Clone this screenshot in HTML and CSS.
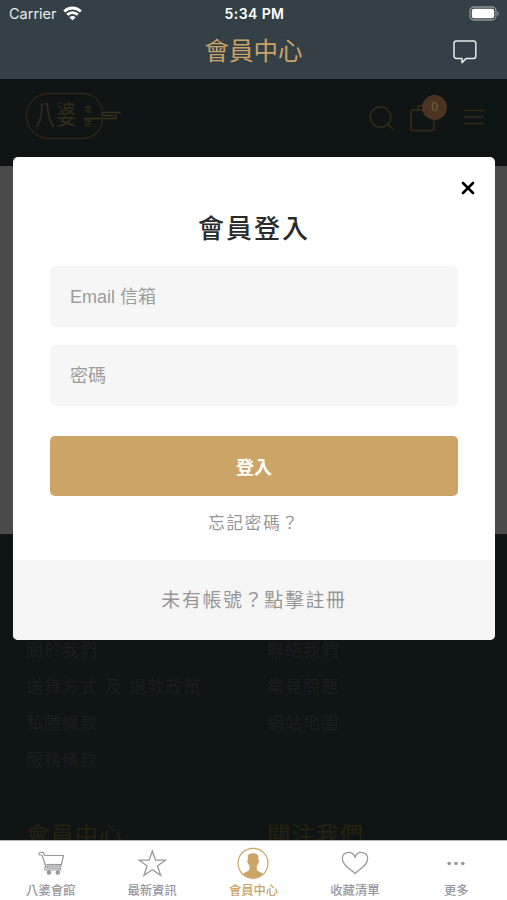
FILE: index.html
```html
<!DOCTYPE html>
<html lang="zh-Hant">
<head>
    <meta charset="UTF-8">
    <meta name="viewport" content="width=device-width, initial-scale=1.0">
    <title>會員中心</title>
    <link rel="stylesheet" href="styles.css">
</head>
<body>
    <div class="app">
        <header class="topbar">
            <div class="status">
                <div class="carrier">
                    <span>Carrier</span>
                    <svg width="19" height="15" viewBox="0 0 19 15" fill="none" stroke="#fff" stroke-width="2.8">
                        <path d="M1.2 5.4a11.8 11.8 0 0 1 16.6 0"/>
                        <path d="M4.2 8.8a7.5 7.5 0 0 1 10.600 0"/>
                        <path d="M9.5 14.2 6.400 11.400a4.300 4.300 0 0 1 6.200 0z" fill="#fff" stroke="none"/>
                    </svg>
                </div>
                <span class="time">5:34 PM</span>
                <svg class="battery" width="31" height="15" viewBox="0 0 31 15">
                    <rect x="1" y="1" width="26" height="13" rx="4" fill="none" stroke="#8d9698" stroke-width="1.3"/>
                    <rect x="2.8" y="2.8" width="22.4" height="9.4" rx="2.2" fill="#fff"/>
                    <path d="M28.4 5.2v4.6c1.8-.6 1.8-4 0-4.6z" fill="#8d9698"/>
                </svg>
            </div>
            <div class="navbar">
                <h1>會員中心</h1>
                <svg class="chat" width="26" height="26" viewBox="0 0 26 26" fill="none" stroke="#e4ebec" stroke-width="1.5" stroke-linejoin="round">
                    <path d="M4.2 2h17.4a2.2 2.2 0 0 1 2.2 2.2v13a2.2 2.2 0 0 1-2.2 2.2h-7.4L10 23.6v-4.2H4.2A2.2 2.2 0 0 1 2 17.2V4.2A2.2 2.2 0 0 1 4.2 2z"/>
                </svg>
            </div>
        </header>

        <div class="webview">
            <div class="shop-header">
                <div class="logo">
                    <div class="logo-text">
                        <span class="logo-ba">八</span>
                        <span class="logo-po">婆</span>
                        <span class="logo-small"><span>會</span><span>館</span></span>
                    </div>
                    <svg class="logo-frame" width="98" height="48" viewBox="0 0 98 48" fill="none" stroke="#2c2619" stroke-width="1.4">
                        <path d="M76.500 19C75 9 67 1.500 56 1.500H23a22.500 22.500 0 0 0 0 45H56c11 0 20-8 20.500-19"/>
                        <path d="M58 26.500H90V23.500H76V20.500H95" stroke="#3a301b"/>
                    </svg>
                </div>
                <div class="shop-icons">
                    <svg width="26" height="26" viewBox="0 0 26 26" fill="none" stroke="#302918" stroke-width="1.8">
                        <circle cx="11.5" cy="12" r="10.2"/>
                        <path d="M18.5 19 24.500 25"/>
                    </svg>
                    <div class="bag">
                        <svg width="26" height="28" viewBox="0 0 26 28" fill="none" stroke="#302918" stroke-width="1.8">
                            <rect x="1" y="6" width="23" height="20.5" rx="2"/>
                            <path d="M7.5 6c0-6 8-6 8 0"/>
                        </svg>
                        <span class="badge">0</span>
                    </div>
                    <svg width="20" height="16" viewBox="0 0 20 16" stroke="#302918" stroke-width="1.6">
                        <path d="M0 1.500H20M0 8H20M0 14.500H20"/>
                    </svg>
                </div>
            </div>
            <div class="shop-body"></div>
            <div class="shop-footer">
                <div class="footer-col">
                    <ul>
                        <li>關於我們</li>
                        <li>送貨方式 及 退款政策</li>
                        <li>私隱條款</li>
                        <li>服務條款</li>
                    </ul>
                    <h3>會員中心</h3>
                </div>
                <div class="footer-col">
                    <ul>
                        <li>聯絡我們</li>
                        <li>常見問題</li>
                        <li>網站地圖</li>
                    </ul>
                    <h3>關注我們</h3>
                </div>
            </div>

            <div class="modal">
                <button class="close" type="button" aria-label="關閉">
                    <svg width="14" height="14" viewBox="0 0 14 14" stroke="#000" stroke-width="2.6" stroke-linecap="round">
                        <path d="M2 2 12 12M12 2 2 12"/>
                    </svg>
                </button>
                <form class="login">
                    <h2>會員登入</h2>
                    <input type="email" placeholder="Email 信箱">
                    <input type="password" placeholder="密碼">
                    <button class="submit" type="button">登入</button>
                    <a class="forgot">忘記密碼？</a>
                </form>
                <a class="register">未有帳號？點擊註冊</a>
            </div>
        </div>

        <nav class="tabbar">
            <a class="tab">
                <svg width="32" height="32" viewBox="0 0 32 32" fill="none" stroke="#97979f" stroke-width="1.2" stroke-linejoin="round">
                    <path d="M9.500 8.500 8.800 6C8.500 5.200 8 5.500 5 5.500C3.500 5.500 3.500 8 5 8H7L10.800 19.500C9 21 9.500 23 11.500 23H25.500V21.200H12.500C11.500 21.200 12 19.200 13 19.200H26L28.500 8.500H9.500"/>
                    <path d="M11.200 17.500H26.300"/>
                    <circle cx="14" cy="25.500" r="1.700" fill="#97979f"/>
                    <circle cx="22.800" cy="25.500" r="1.700" fill="#97979f"/>
                </svg>
                <span>八婆會館</span>
            </a>
            <a class="tab">
                <svg width="32" height="32" viewBox="0 0 32 32" fill="none" stroke="#97979f" stroke-width="1.3">
                    <path d="M16.300 4 19.500 13.200H29.300L21.500 19 24.700 28.400 16.300 22.800 7.900 28.400 11.100 19 3.300 13.200H13.100z"/>
                </svg>
                <span>最新資訊</span>
            </a>
            <a class="tab active">
                <svg width="32" height="32" viewBox="0 0 32 32">
                    <circle cx="16" cy="16.3" r="15" fill="none" stroke="#cba567" stroke-width="1.2"/>
                    <path d="M10.800 9.500C10.500 5 21.500 5 21.300 9.500L21.500 13C22.500 13.500 21.700 16.500 20.700 17L19.800 19.500V22.500C20.500 24.500 24 25 26.300 27C21 32.300 11 32.300 5.700 27C8 25 11.500 24.500 12.500 22.500V19.500L11.500 17C10.300 16.500 9.800 13.500 10.800 13z" fill="#cba567"/>
                </svg>
                <span>會員中心</span>
            </a>
            <a class="tab">
                <svg width="32" height="32" viewBox="0 0 32 32" fill="none" stroke="#97979f" stroke-width="1.2">
                    <path d="M16 26.5C11 22 3.300 18 3.300 11.800C3.300 4.500 13 3 16 10.200C19 3 28.700 4.500 28.700 11.800C28.700 18 21 22 16 26.500z"/>
                </svg>
                <span>收藏清單</span>
            </a>
            <a class="tab">
                <svg width="32" height="32" viewBox="0 0 32 32" fill="#97979f">
                    <circle cx="9.2" cy="16.500" r="1.8"/>
                    <circle cx="16" cy="16.500" r="1.8"/>
                    <circle cx="22.8" cy="16.500" r="1.8"/>
                </svg>
                <span>更多</span>
            </a>
        </nav>
    </div>
</body>
</html>
```
FILE: styles.css
```css
* {
    box-sizing: border-box;
}

body {
    margin: 0;
    font-family: "Liberation Sans", "Noto Sans CJK TC", sans-serif;
}

h1, h2, h3, ul {
    margin: 0;
    padding: 0;
    font-weight: normal;
}

svg {
    display: block;
}

.app {
    display: flex;
    flex-direction: column;
    height: 900px;
    overflow: hidden;
}

/* top bar */
.topbar {
    height: 79px;
    background: #344046;
}

.status {
    display: grid;
    grid-template-columns: 1fr auto 1fr;
    align-items: center;
    height: 27px;
    padding: 0 7px 0 9px;
    color: #fff;
    font-family: Inter, sans-serif;
    font-size: 14.5px;
}

.carrier {
    display: flex;
    align-items: center;
    gap: 6px;
    color: #e8edee;
}

.time {
    font-size: 14px;
    font-weight: 600;
    letter-spacing: 0.4px;
}

.battery {
    justify-self: end;
}

.navbar {
    display: grid;
    grid-template-columns: 1fr auto 1fr;
    align-items: center;
    height: 49px;
    padding: 0 29px;
}

.navbar h1 {
    grid-column: 2;
    padding-top: 1px;
    color: #c9a469;
    font-size: 24.5px;
    line-height: 36px;
}

.chat {
    justify-self: end;
}

/* shop page */
.webview {
    position: relative;
    flex: 1;
    min-height: 0;
    overflow: hidden;
    background: #0f1415;
}

.shop-header {
    display: flex;
    justify-content: space-between;
    height: 87px;
    padding: 13px 23px 0 26px;
}

.logo {
    position: relative;
    width: 98px;
    height: 48px;
    color: #342c1b;
}

.logo-frame {
    position: absolute;
    top: 0;
    left: 0;
}

.logo-text {
    display: flex;
    align-items: center;
    height: 48px;
    padding-left: 9px;
}

.logo-ba {
    width: 22px;
    font-size: 20px;
    line-height: 28px;
    transform: scaleY(1.35);
}

.logo-po {
    width: 27px;
    font-size: 19px;
    line-height: 28px;
    transform: scaleY(1.35);
}

.logo-small {
    display: flex;
    flex-direction: column;
    gap: 6px;
    padding-top: 2px;
    font-size: 8px;
    line-height: 8px;
}

.shop-icons {
    display: flex;
    align-items: flex-start;
    padding-top: 13px;
}

.shop-icons > svg:first-child {
    margin-right: 1px;
}

.bag {
    position: relative;
    margin: -1px 28px 0 14px;
}

.badge {
    position: absolute;
    top: -9px;
    left: 12px;
    width: 25px;
    height: 25px;
    border-radius: 50%;
    background: #4b3421;
    color: #7c6142;
    font-size: 12px;
    line-height: 24px;
    text-align: center;
}

.shop-icons > svg:last-child {
    margin-top: 4px;
}

.shop-body {
    height: 368px;
    background: #4a4a4a;
}

.shop-footer {
    display: grid;
    grid-template-columns: 241px 1fr;
    padding: 99px 26px 0;
}

.footer-col ul {
    height: 173px;
    list-style: none;
    color: #1b1f20;
    font-size: 17px;
    letter-spacing: 1px;
    line-height: 36.7px;
}

.footer-col li {
    word-spacing: 1px;
}

.footer-col h3 {
    color: #26220f;
    font-size: 23.5px;
    letter-spacing: 0.7px;
    line-height: 60px;
}

/* login modal */
.modal {
    position: absolute;
    top: 78px;
    left: 13px;
    right: 12px;
    height: 483px;
    overflow: hidden;
    border-radius: 5px;
    background: #fff;
    text-align: center;
}

.close {
    position: absolute;
    top: 24px;
    right: 20px;
    padding: 0;
    border: none;
    background: none;
    cursor: pointer;
}

.login {
    display: flex;
    flex-direction: column;
    height: 403px;
    padding: 51px 37px 0;
}

.login h2 {
    height: 58px;
    color: #2a2a2a;
    font-size: 26px;
    font-weight: 500;
    letter-spacing: 2px;
    line-height: 42px;
}

.login input {
    height: 61px;
    margin-bottom: 18px;
    padding: 1px 20px 0;
    border: none;
    border-radius: 5px;
    background: #f6f6f6;
    font-family: inherit;
    font-size: 18px;
}

.login input::placeholder {
    color: #9c9c9c;
}

.submit {
    height: 60px;
    margin-top: 12px;
    padding: 0;
    border: none;
    border-radius: 5px;
    background: #cba567;
    color: #fff;
    font-family: inherit;
    font-size: 18px;
    font-weight: bold;
    cursor: pointer;
}

.forgot {
    padding-top: 13px;
    color: #969696;
    font-size: 16.5px;
    letter-spacing: 1.8px;
    line-height: 28px;
}

.register {
    display: block;
    height: 80px;
    padding-top: 1px;
    background: #f6f6f6;
    color: #969696;
    font-size: 19px;
    letter-spacing: 1.6px;
    line-height: 80px;
}

/* bottom tabs */
.tabbar {
    display: grid;
    grid-template-columns: repeat(5, 1fr);
    height: 60px;
    padding-top: 6px;
    border-top: 1px solid #b2b2b2;
    background: #fff;
}

.tab {
    display: flex;
    flex-direction: column;
    align-items: center;
    color: #97979f;
    font-size: 12.3px;
    font-weight: 500;
    line-height: 25px;
}

.tab.active {
    color: #cba567;
}
```
